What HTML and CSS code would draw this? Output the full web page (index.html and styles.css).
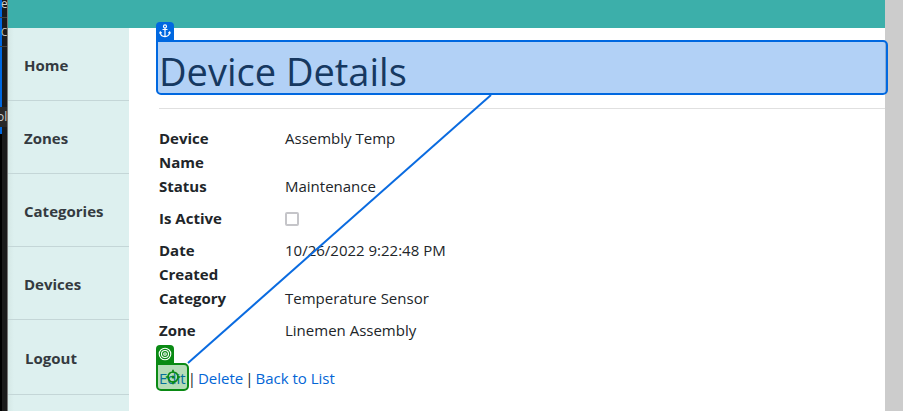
FILE: index.html
```
<!DOCTYPE html>
<html lang="en">
<head>
<meta charset="utf-8">
<title>Device Details</title>
<meta name="viewport" content="width=device-width, initial-scale=1">
<link rel="stylesheet" href="styles.css">
</head>
<body>
<div class="desktop">
  <aside class="behind" aria-hidden="true">
    <div class="behind-row first">e</div>
    <div class="behind-row second">C</div>
    <div class="behind-space"></div>
    <div class="behind-row chip">ol</div>
  </aside>
  <div class="app">
    <header class="topbar"></header>
    <div class="body">
      <nav class="sidebar">
        <a class="nav-item" href="#">Home</a>
        <a class="nav-item" href="#">Zones</a>
        <a class="nav-item" href="#">Categories</a>
        <a class="nav-item" href="#">Devices</a>
        <button class="nav-item logout" type="button">Logout</button>
      </nav>
      <main class="content">
        <div class="heading">
          <h1>Device Details</h1>
          <div class="mark anchor-mark">
            <span class="tab">
              <svg viewBox="0 0 18 18" width="18" height="18" fill="none" stroke="#fff" stroke-width="1.2"><circle cx="9" cy="4.4" r="1.5"/><path d="M9 6v8.600M6.500 7.500h5M4.300 10.300c0 2.600 2 4.300 4.700 4.300s4.700-1.700 4.700-4.300M3.500 11.500l.8-1.500 1.400 1.100M14.500 11.500l-.8-1.500-1.400 1.100"/></svg>
            </span>
          </div>
        </div>
        <hr>
        <dl class="details">
          <dt>Device Name</dt><dd>Assembly Temp</dd>
          <dt>Status</dt><dd>Maintenance</dd>
          <dt><label for="active">Is Active</label></dt><dd><input class="check" id="active" type="checkbox" disabled></dd>
          <dt>Date Created</dt><dd>10/26/2022 9:22:48 PM</dd>
          <dt>Category</dt><dd>Temperature Sensor</dd>
          <dt>Zone</dt><dd>Linemen Assembly</dd>
        </dl>
        <div class="links">
          <span class="edit"><a href="#">Edit</a>
            <span class="mark target-mark">
              <span class="tab">
                <svg viewBox="0 0 18 18" width="18" height="18" fill="none" stroke="#fff" stroke-width="1.1"><circle cx="9" cy="9" r="5.800"/><circle cx="9" cy="9" r="3.500"/><circle cx="9" cy="9" r="1.300"/></svg>
              </span>
              <svg class="crosshair" viewBox="0 0 16 16" width="16" height="16" fill="none" stroke="#0a8a14" stroke-width="1.700"><circle cx="8" cy="8" r="5"/><path d="M8 .8v3M8 12.200v3M.8 8h3M12.200 8h3"/><circle cx="8" cy="8" r="1.500" fill="#0a8a14" stroke="none"/></svg>
            </span>
          </span>
          <span>|</span>
          <a href="#">Delete</a>
          <span>|</span>
          <a href="#">Back to List</a>
        </div>
      </main>
    </div>
  </div>
  <svg class="connector" viewBox="0 0 303 268" width="303" height="268" aria-hidden="true"><path d="M303 0 0 268" stroke="#0a6be0" stroke-width="2"/></svg>
</div>
</body>
</html>
```
FILE: styles.css
```
* { box-sizing: border-box; }

body {
  margin: 0;
  background: #ccc;
  color: #212529;
  font: 15px/24px "Open Sans", "Noto Sans", sans-serif;
}

.desktop {
  position: relative;
  display: flex;
  min-height: 100vh;
  padding-right: 18px;
}

.behind {
  flex: 0 0 8px;
  overflow: hidden;
  background: linear-gradient(#0068e0, #0068e0) 0 0 / 2px 134px no-repeat, linear-gradient(90deg, #000 2px, #1b1b1b 2px);
  border-right: 1px solid #777;
  color: #ccc;
  font-size: 12px;
}

.behind-row {
  height: 29px;
  padding-left: 1px;
  border-bottom: 1px solid #444;
}

.first { height: 18px; line-height: 8px; }
.second { font-size: 10px; line-height: 28px; }
.behind-space { height: 60px; }

.chip {
  height: 20px;
  border: 0;
  background: #292929;
  line-height: 20px;
  text-indent: -4px;
}

.app {
  flex: 1;
  display: flex;
  flex-direction: column;
  background: #fff;
}

.topbar { height: 28px; background: #3cafaa; }
.body { flex: 1; display: flex; }

.sidebar {
  flex: 0 0 121px;
  background: linear-gradient(90deg, #d5e8e6, #ddf0ef 6px);
}

.nav-item {
  display: flex;
  align-items: center;
  width: 100%;
  height: 73px;
  padding: 2px 16px 0;
  border: 0;
  border-bottom: 1px solid #c4d6d7;
  background: none;
  color: #343a40;
  font: inherit;
  font-weight: 700;
  text-decoration: none;
}

.logout { height: 75px; padding-left: 17px; }

.content { flex: 1; padding: 15px 0 0 30px; }

.heading { position: relative; }

h1 {
  margin: 0;
  font-size: 38px;
  font-weight: 400;
  line-height: 56px;
}

hr {
  margin: 9px 0 17px;
  border: 0;
  border-top: 1px solid #e0e0e0;
}

.details {
  display: grid;
  grid-template-columns: 126px 1fr;
  margin: 0 0 16px;
}

dt { padding-right: 32px; font-weight: 700; }
dd { margin: 0 0 8px; }

.details dt:nth-of-type(1) + dd,
.details dt:nth-of-type(4) + dd { margin-bottom: 0; }

.check {
  appearance: none;
  display: block;
  width: 14px;
  height: 14px;
  margin: 6px 0 4px;
  border: 2px solid #c5c5c9;
  border-radius: 2px;
  background: #fff;
}

.links { display: flex; gap: 2px; }
.links a { color: #0366d6; text-decoration: none; }

.edit { position: relative; }

.mark {
  position: absolute;
  border: 2px solid;
  border-radius: 5px;
}

.anchor-mark {
  inset: -3px -3px 4px;
  border-color: #0068e0;
  border-top-left-radius: 0;
  background: rgba(0, 104, 224, .3);
}

.target-mark {
  inset: -3px -3px -1px;
  border-color: #0a8a14;
  border-top-left-radius: 0;
  background: rgba(10, 138, 20, .3);
}

.tab {
  position: absolute;
  left: -2px;
  bottom: 100%;
  height: 20px;
  border-radius: 4px 4px 0 0;
}

.tab svg { display: block; }
.anchor-mark .tab { background: #0068e0; }
.target-mark .tab { background: #0a8a14; }

.crosshair {
  position: absolute;
  top: 4px;
  left: 7px;
}

.connector {
  position: absolute;
  top: 95px;
  left: 188px;
  overflow: visible;
}
```
